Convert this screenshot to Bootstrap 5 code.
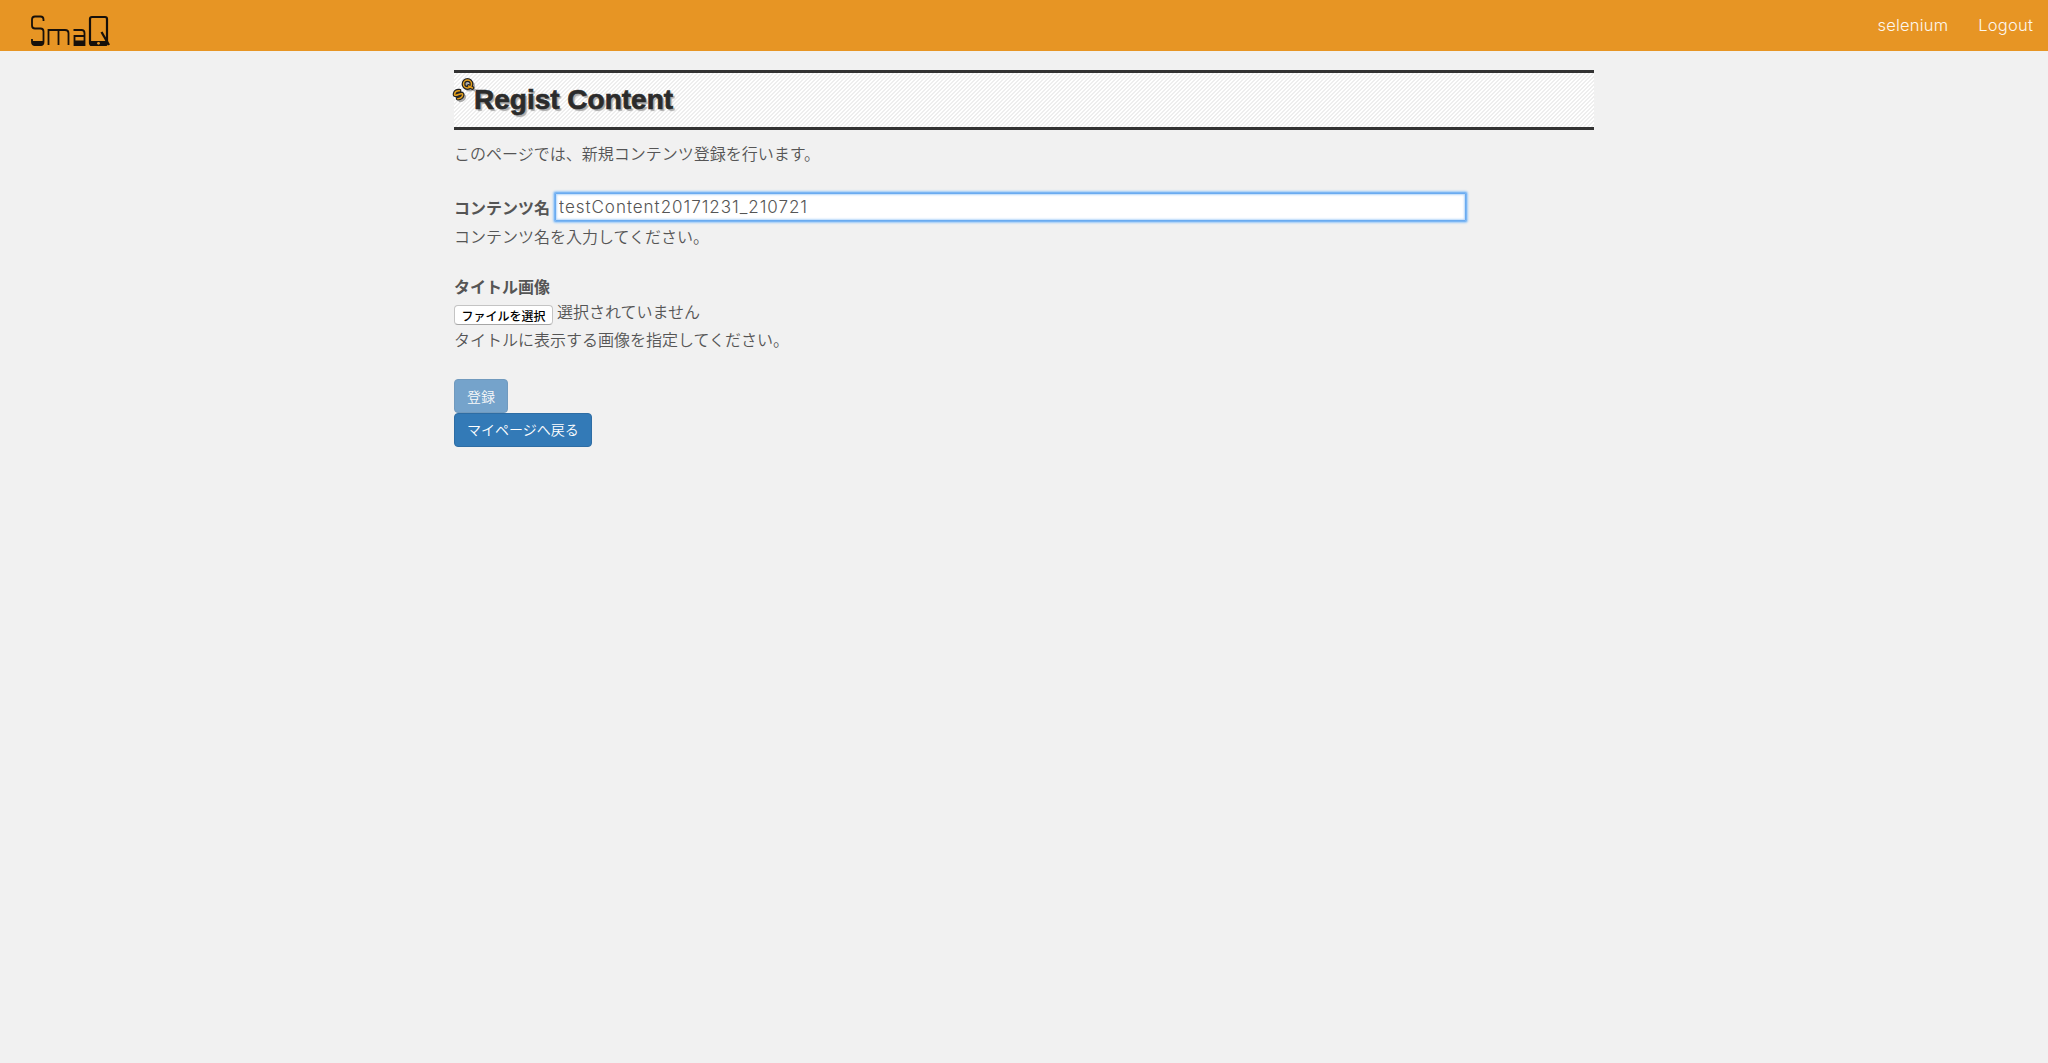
<!DOCTYPE html>
<html lang="ja">
<head>
<meta charset="utf-8">
<title>Regist Content</title>
<link href="https://cdn.jsdelivr.net/npm/bootstrap@5.3.0/dist/css/bootstrap.min.css" rel="stylesheet">
<style>
body{background:#f1f1f1;color:#555;font-family:Inter,"Noto Sans CJK JP",sans-serif;font-size:16px;line-height:24px}
.jp{font-family:"Noto Sans CJK JP",sans-serif;font-weight:350}
.topbar{background:#e79524;height:51px;padding:0 15px 0 30px}
.topbar .nav-link{color:#fdf7ee;padding:0;line-height:51px;font-weight:300;font-size:16.5px;letter-spacing:.2px}
.topbar .navbar-nav{gap:30px}
.logo{margin-top:10px}
.main-col{width:1140px;margin-top:19px}
.page-title{height:60px;border-top:3px solid #333;border-bottom:3px solid #333;padding:11px 0 0 20px;margin:0;
background:linear-gradient(135deg,#fff 25%,#eee 25% 50%,#fff 50% 75%,#eee 75%) 0 0/4px 4px;
font:bold 28px/32px "Liberation Sans",Arial,sans-serif;color:#2b2b2b;text-shadow:2px 2px 1px #aaa;position:relative}
.page-title svg{position:absolute;left:-2px;top:3px}
.heading-text{display:inline-block;-webkit-text-stroke:.7px #2b2b2b}
.intro{margin:11px 0 28px}
.field-label{font-weight:700;line-height:24px}
.name-row .field-label{margin-top:-1px}
.name-input{width:911px;height:28px;border:1px solid #6aabf0;border-radius:1px;padding:0 3px;color:#555;background:#fff;outline:0;box-shadow:0 0 0 1px #7cb6f3,0 0 2px 2px #9ccaf8,inset 0 0 2px 1px #b8d8fa;margin-left:5px;font-size:17px;font-weight:300;letter-spacing:.97px}
.desc-a{margin-top:3px}
.image-label{margin-top:26px}
.file-row{margin-top:1px}
.file-btn{width:99px;height:20px;border:1px solid #c4c4c4;border-bottom-color:#a6a6a6;border-radius:4px;background:#fff;color:#000;font-size:12px;line-height:17px;font-weight:500;padding:0;margin:6px 4px 0 0}
.desc-b{margin:2px 0 28px}
.btn-act{font-size:14px;line-height:19px;height:34px;padding:6px 12px;border:1px solid #2e6da4;border-radius:4px;background:#337ab7;color:#fff}
.btn-act:disabled{background:#337ab7;border-color:#2e6da4;color:#fff;opacity:.65}
</style>
</head>
<body>
<nav class="topbar d-flex justify-content-between align-items-start">
<a href="#" class="logo d-block lh-1" aria-label="SmaQ"><svg width="82" height="38" viewBox="0 0 82 38" fill="none" stroke="#17100a" stroke-width="1.8">
<path d="M13.5 11V9.5Q13.5 6.5 10.5 6.5H5Q2 6.5 2 9.5V15.5Q2 18.5 5 18.5H10.5Q13.5 18.5 13.5 21.500V32Q13.5 35 10.500 35H5Q2 35 2 32V29"/>
<path d="M18.500 35V20H35Q38.500 20 38.500 23V35M28.500 20V35M43.500 20H51.500Q54.500 20 54.500 23V35H44.500V26H54"/>
<rect x="60" y="7" width="17" height="28" rx="2" stroke-width="2.2"/>
<path fill="#17100a" stroke="none" d="M2 31H14L12 35.500H4ZM44 30.500H55V35.500H44ZM60 31H77V35.500H60Z"/>
<path stroke-width="2.300" d="M71.500 22L79 35"/><circle cx="68.500" cy="33.300" r="1.400" fill="#e79524" stroke="none"/>
</svg></a>
<div class="navbar-nav flex-row"><a class="nav-link" href="#">selenium</a><a class="nav-link" href="#">Logout</a></div>
</nav>
<main class="main-col mx-auto">
<h1 class="page-title"><svg width="28" height="28" viewBox="0 0 28 28" fill="none" stroke-linecap="round">
<defs><g id="sq"><circle cx="15.500" cy="8" r="4"/><path d="M16.500 10L20.500 12"/><path transform="translate(6.500 18.500) rotate(-35)" d="M3 -2.500Q0 -5 -2.500 -3T0 0T2.800 3T-3 3"/></g></defs>
<use href="#sq" stroke="#aaa" stroke-width="3" transform="translate(2 2)"/>
<use href="#sq" stroke="#222" stroke-width="3.800"/>
<use href="#sq" stroke="#e5a01d" stroke-width="1.500"/>
</svg><span class="heading-text">Regist Content</span></h1>
<p class="intro jp">このページでは、新規コンテンツ登録を行います。</p>
<form>
<div class="d-flex align-items-center name-row"><label class="field-label jp fw-bold" for="cname">コンテンツ名</label><input id="cname" class="name-input" type="text" value="testContent20171231_210721"></div>
<p class="jp desc-a mb-0">コンテンツ名を入力してください。</p>
<div class="field-label jp fw-bold image-label">タイトル画像</div>
<div class="d-flex align-items-start file-row"><button type="button" class="file-btn jp">ファイルを選択</button><span class="jp">選択されていません</span></div>
<p class="jp desc-b">タイトルに表示する画像を指定してください。</p>
<div class="d-flex flex-column align-items-start"><button type="button" class="btn btn-act jp" disabled>登録</button><a href="#" class="btn btn-act jp">マイページへ戻る</a></div>
</form>
</main>
<script src="https://cdn.jsdelivr.net/npm/bootstrap@5.3.0/dist/js/bootstrap.bundle.min.js"></script>
</body>
</html>
